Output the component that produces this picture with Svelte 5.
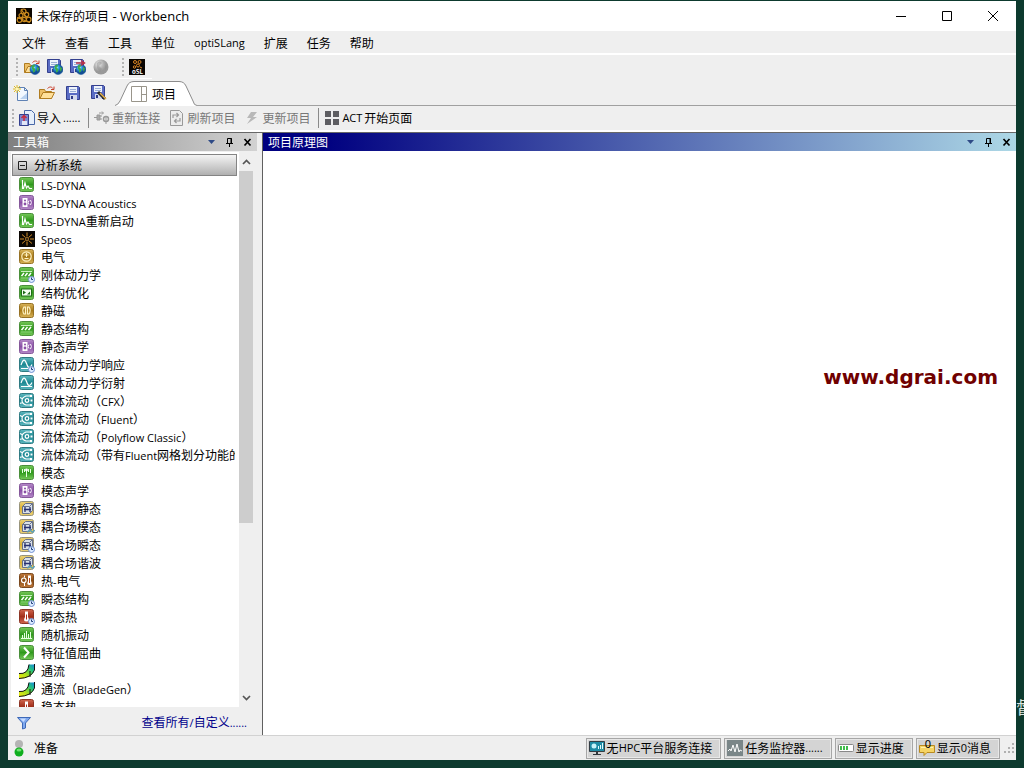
<script>
  const menus = ['文件', '查看', '工具', '单位', 'optiSLang', '扩展', '任务', '帮助'];
  const systems = [
    ['LS-DYNA', 'dyna'],
    ['LS-DYNA Acoustics', 'acoustic'],
    ['LS-DYNA重新启动', 'dyna'],
    ['Speos', 'speos'],
    ['电气', 'electric'],
    ['刚体动力学', 'structure', 'clock'],
    ['结构优化', 'optimize'],
    ['静磁', 'magnet'],
    ['静态结构', 'structure'],
    ['静态声学', 'acoustic'],
    ['流体动力学响应', 'hydro', 'clock'],
    ['流体动力学衍射', 'hydro'],
    ['流体流动（CFX）', 'fluid'],
    ['流体流动（Fluent）', 'fluid'],
    ['流体流动（Polyflow Classic）', 'fluid'],
    ['流体流动（带有Fluent网格划分功能的）', 'fluid'],
    ['模态', 'modal'],
    ['模态声学', 'acoustic'],
    ['耦合场静态', 'coupled'],
    ['耦合场模态', 'coupled', 'wave'],
    ['耦合场瞬态', 'coupled', 'clock'],
    ['耦合场谐波', 'coupled', 'wave'],
    ['热-电气', 'thermoelectric'],
    ['瞬态结构', 'structure', 'clock'],
    ['瞬态热', 'thermal', 'clock'],
    ['随机振动', 'random'],
    ['特征值屈曲', 'buckling'],
    ['通流', 'blade'],
    ['通流（BladeGen）', 'blade'],
    ['稳态热', 'thermal']
  ];
  const tiles = {
    dyna: 'green', structure: 'green', optimize: 'green', modal: 'green', random: 'green', buckling: 'green',
    acoustic: 'purple', electric: 'gold', magnet: 'gold', hydro: 'teal', fluid: 'teal',
    coupled: 'sand', thermoelectric: 'brown', thermal: 'red'
  };
  const gradients = [
    ['green', '#77c95a', '#2f9a1c', '#4a8f3a'],
    ['purple', '#b58bc8', '#8a4fa6', '#85589a'],
    ['gold', '#d9b45a', '#a87a18', '#967226'],
    ['teal', '#5fb9c0', '#1c8791', '#2f7a82'],
    ['sand', '#ead27a', '#dcb030', '#97937c'],
    ['brown', '#c07a3c', '#8a4a12', '#7b4a20'],
    ['red', '#d0664e', '#a3301c', '#8d3626']
  ];
  const strokes = Object.fromEntries(gradients.map((g) => [g[0], g[3]]));
  const split = (text) => text.match(/[\x20-\x7e]+|[^\x20-\x7e]+/g);
  const latin = (part) => /^[\x20-\x7e]/.test(part);
</script>

{#snippet label(text)}{#each split(text) as part}<span class:latin={latin(part)}>{part}</span>{/each}{/snippet}

{#snippet floppy(x, y)}
  <g transform="translate({x} {y})">
    <path d="M.5 .5h12l1 1v12H.5z" fill="#5a6cc4" stroke="#34408e" />
    <path d="M3 1h8v6H3z" fill="#eef3fb" /><path d="M4 3.500h6M4 5.500h6" stroke="#9aaed6" />
    <path d="M4 9h7v5H4z" fill="#d5daec" /><path d="M5 10h2v3H5z" fill="#2d3a86" />
  </g>
{/snippet}

{#snippet globe()}
  <circle cx="11" cy="10.5" r="5" fill="url(#globe)" stroke="#1d5b9c" stroke-width=".6" />
  <path d="M8 7c2-2 3-1 3 0s-2 1-1 2 2 1 1 3-2 2-2 0-2-2-1-5zM13 8l2 1-1 4-1-2z" fill="#3fae4a" />
{/snippet}

{#snippet folder()}
  <path d="M.5 13.500v-9h5l1 2h6v7z" fill="#eec068" stroke="#b07c20" />
  <path d="M1 13.500l3-6h11.500l-3 6z" fill="#ffe09a" stroke="#b07c20" />
  <path d="M8.500 3.500c2-2 4-2 5.500 0M15 1.500v3h-3" fill="none" stroke="#c8402c" />
{/snippet}

{#snippet icon(kind, extra)}
  <svg class="icon" width="16" height="16" viewBox="0 0 16 16" aria-hidden="true">
    {#if tiles[kind]}
      <rect x=".5" y=".5" width="14" height="14" rx="2" fill="url(#{tiles[kind]})" stroke={strokes[tiles[kind]]} />
    {/if}
    {#if kind === 'dyna'}
      <path d="M3.500 3v8.500h1L6 6l1.500 5 1.500-2 1.500 2.500H13" fill="none" stroke="#fff" stroke-width="1.200" />
    {:else if kind === 'acoustic'}
      <rect x="3.500" y="3" width="5" height="9" fill="#fff" /><circle cx="6" cy="5.500" r="1" fill="#8a4fa6" /><circle cx="6" cy="9" r="1.400" fill="#8a4fa6" />
      <path d="M10 5.500q-1.500 2 0 4M11.500 5q1.800 2.500 0 5" fill="none" stroke="#fff" />
    {:else if kind === 'speos'}
      <path d="M0 0h16v16H0z" fill="#0c0803" />
      <path d="M8 1.500v4M8 10.500v4M1 8h4M11 8h4M3 3.500l3.500 3M9.500 9.500l3.500 3M13 3.500l-3.500 3M6.500 9.500l-3.500 3" stroke="#d08c28" />
      <circle cx="8" cy="8" r="1.500" fill="#0c0803" stroke="#e0a040" stroke-width=".7" />
    {:else if kind === 'electric'}
      <circle cx="7.500" cy="7.500" r="4.700" fill="none" stroke="#fff3c4" stroke-width="1.200" />
      <path d="M5.500 6h4M7.500 4v4M5.500 9.500h4" stroke="#fff3c4" />
    {:else if kind === 'magnet'}
      <path d="M6.500 3.500v8M8.500 3.500v8M5.500 3.500q-3.500 4 0 8M9.500 3.500q3.500 4 0 8" fill="none" stroke="#fff3c4" stroke-width="1.200" />
    {:else if kind === 'structure'}
      <path d="M2 4.500h11" stroke="#c9efbd" /><path d="M2.500 9l2.500-3M6 9l2.500-3M9.500 9L12 6" stroke="#fff" stroke-width="1.500" />
      <path d="M2 11h11" stroke="#8cd47a" />
    {:else if kind === 'optimize'}
      <rect x="2.500" y="4" width="10" height="7" fill="#f5fff0" stroke="#206e18" /><path d="M4 5.500l3 2-3 2zM8 9.500l3-3v3z" fill="#1f6b18" />
    {:else if kind === 'hydro'}
      <path d="M2 8q3-9 5.500-1.500T13 7.500M2 11.500h11" fill="none" stroke="#fff" stroke-width="1.200" />
    {:else if kind === 'fluid'}
      <circle cx="8" cy="7.500" r="1.800" fill="none" stroke="#fff" stroke-width="1.300" />
      <path d="M12 3H7Q3 4.500 3 7.500T7 12h5M1 4.500L4 6M1 10.500L4 9" fill="none" stroke="#fff" stroke-width="1.200" /><path d="M11 2h2v2h-2zM11 11h2v2h-2zM11.500 6.500h2v2h-2z" fill="#fff" />
    {:else if kind === 'modal'}
      <path d="M7.500 6v6M3.500 4v4M5.500 4v3M9.500 4v3M11.500 4v4" stroke="#e6ffe0" /><circle cx="7.500" cy="5" r="1.400" fill="#fff" />
    {:else if kind === 'coupled'}
      <path d="M3.500 5.500l3-3h7v7l-3 3h-7z" fill="#d9e0e8" stroke="#66718a" /><path d="M3.500 5.500h7M10.500 5.500l3-3" fill="none" stroke="#66718a" />
      <path d="M6 6v5M11 6v5M5 8.500h7" stroke="#273070" stroke-width="1.300" />
    {:else if kind === 'thermoelectric'}
      <path d="M5.500 2.500v2M5.500 10v3" stroke="#fff" /><circle cx="4.800" cy="7.300" r="2.300" fill="none" stroke="#fff" stroke-width="1.200" /><path d="M9 2.500h3V8q2 4-1.500 4T9 8z" fill="#fff" /><path d="M10.500 5v5" stroke="#b4481c" />
    {:else if kind === 'thermal'}
      <path d="M6 2.500h3V8q2.500 4.500-1.500 4.500T6 8z" fill="#fff" /><path d="M7.500 5.500v5" stroke="#b02a18" />
    {:else if kind === 'random'}
      <path d="M3.500 8v4M5.500 6v6M7.500 4v8M9.500 7v5M11.500 5v7M2 11.500h11" stroke="#e6ffe0" />
    {:else if kind === 'buckling'}
      <path d="M5 2.500l4.500 5-4.500 5" fill="none" stroke="#fff" stroke-width="2" />
    {:else if kind === 'blade'}
      <path d="M0 10.500q9 1 10-9h5.500q0 5-1 8-4 6-14.500 6z" fill="url(#blade)" />
      <path d="M0 10.500q9 1 10-9M15.500 1v6q-3 8-15.500 8.500M11 8v6" fill="none" stroke="#111" />
    {/if}
    {#if extra === 'clock'}
      <circle cx="12.500" cy="12.500" r="3" fill="#dcebff" stroke="#6f8fd0" /><path d="M12.500 10.500v2h1.500" fill="none" stroke="#24407c" />
    {:else if extra === 'wave'}
      <path d="M8.500 13.500q2-4 3.500-1.500t3.500-1" fill="none" stroke="#5aa0b8" stroke-width="1.500" />
    {/if}
  </svg>
{/snippet}

{#snippet paneTools()}
  <span class="pane-tools">
    <button aria-label="选项"><svg width="9" height="10" viewBox="0 0 9 10"><path d="M1 3h7L4.500 7z" fill="#2e4a86" /></svg></button>
    <button aria-label="固定"><svg width="9" height="10" viewBox="0 0 9 10"><path d="M2.500 6V1.500h4V6M1 6.500h7M4.500 7v3M6 1v5" fill="none" stroke="#000" /></svg></button>
    <button aria-label="关闭"><svg width="9" height="10" viewBox="0 0 9 10"><path d="M1.500 2l6 6.500M7.500 2l-6 6.500" stroke="#000" stroke-width="1.700" /></svg></button>
  </span>
{/snippet}

<svg class="defs" aria-hidden="true">
  <defs>
    {#each gradients as g}
      <linearGradient id={g[0]} x2="0" y2="1"><stop stop-color={g[1]} /><stop offset=".5" stop-color={g[2]} /><stop offset="1" stop-color={g[1]} /></linearGradient>
    {/each}
    <linearGradient id="blade" x1="0" y1="1" x2="1" y2="0"><stop stop-color="#f4e80c" /><stop offset=".4" stop-color="#a5df20" /><stop offset=".7" stop-color="#22c47a" /><stop offset="1" stop-color="#1a86e0" /></linearGradient>
    <radialGradient id="globe" cx=".35" cy=".3"><stop stop-color="#bfefff" /><stop offset=".5" stop-color="#2a9be0" /><stop offset="1" stop-color="#124d96" /></radialGradient>
    <radialGradient id="ball" cx=".35" cy=".3"><stop stop-color="#eee" /><stop offset=".6" stop-color="#b4b4b4" /><stop offset="1" stop-color="#999" /></radialGradient>
  </defs>
</svg>

<div class="desktop">
  <span class="shortcut">督</span>
  <main class="window">
    <header class="titlebar">
      <svg width="16" height="16" viewBox="0 0 16 16" aria-hidden="true">
        <path d="M0 0h16v16H0z" fill="#0d0700" />
        <g fill="none" stroke="#c98a1e" stroke-width="1.200"><circle cx="7.500" cy="3.500" r="2.500" /><circle cx="5" cy="7.500" r="2" /><circle cx="10.500" cy="6.500" r="2.200" /><circle cx="3.500" cy="12" r="2.300" /><circle cx="8.200" cy="11.500" r="2.200" /><circle cx="12.700" cy="11.500" r="2.300" /><path d="M1 9.500l13 5M5 1l6 9" /></g>
      </svg>
      <h1>未保存的项目<span>{' - Workbench'}</span></h1>
      <div class="caption">
        <button aria-label="最小化"><svg width="12" height="12" viewBox="0 0 12 12"><path d="M1 6.500h10" stroke="#000" /></svg></button>
        <button aria-label="最大化"><svg width="12" height="12" viewBox="0 0 12 12"><path d="M1.500 1.500h9v9h-9z" fill="none" stroke="#000" /></svg></button>
        <button aria-label="关闭窗口"><svg width="12" height="12" viewBox="0 0 12 12"><path d="M1 1l10 10M11 1L1 11" stroke="#000" /></svg></button>
      </div>
    </header>

    <nav class="menu">
      {#each menus as m}<button>{@render label(m)}</button>{/each}
    </nav>

    <div class="tools">
      <i class="grip"></i>
      <button aria-label="从存储库打开"><svg width="16" height="16" viewBox="0 0 16 16">{@render folder()}{@render globe()}</svg></button>
      <button aria-label="保存到存储库"><svg width="16" height="16" viewBox="0 0 16 16">{@render floppy(0, 0)}{@render globe()}</svg></button>
      <button aria-label="发送更改"><svg width="16" height="16" viewBox="0 0 16 16">{@render floppy(0, 0)}{@render globe()}<path d="M6 4h8M11 1.500L14.500 4 11 6.500" fill="none" stroke="#b83048" stroke-width="1.500" /></svg></button>
      <button aria-label="连接" disabled><svg width="16" height="16" viewBox="0 0 16 16"><circle cx="8" cy="8" r="7.500" fill="url(#ball)" /><path d="M4 4q3-3 5 0l-3 3 3 3-2 3-3-4zM12 6l2 2-2 4z" fill="#909090" opacity=".5" /></svg></button>
      <i class="grip second"></i>
      <button aria-label="oSL"><svg width="16" height="16" viewBox="0 0 16 16"><path d="M0 0h16v16H0z" fill="#0a0603" /><g fill="none" stroke="#d88424"><circle cx="6" cy="3" r="1.500" /><circle cx="10.500" cy="3" r="1.500" /><circle cx="9" cy="6.500" r="1.500" /><circle cx="5.500" cy="8" r="1.200" /><path d="M11 8l2 1" /></g><text x="3" y="15" fill="#fff" font-size="6" font-weight="700">oSL</text></svg></button>
    </div>

    <div class="tabs">
      <button aria-label="新建"><svg width="16" height="16" viewBox="0 0 16 16"><path d="M4.500 2.500h7l3 3v10h-10z" fill="#f2f8ff" stroke="#5f82b4" /><path d="M11.500 2.500v3h3" fill="none" stroke="#5f82b4" /><path d="M7 14h7V8z" fill="#b9d2f0" /><path d="M4 0v8M0 4h8M1 1l6 6M7 1L1 7" stroke="#e0bb20" /><circle cx="4" cy="4" r="1.500" fill="#fff7b0" /></svg></button>
      <button aria-label="打开"><svg width="16" height="16" viewBox="0 0 16 16">{@render folder()}</svg></button>
      <button aria-label="保存"><svg width="16" height="16" viewBox="0 0 16 16">{@render floppy(1, 1)}</svg></button>
      <button aria-label="另存为"><svg width="16" height="16" viewBox="0 0 16 16">{@render floppy(0, 0)}<path d="M7 7l7 7" stroke="#2a2a2a" stroke-width="3" /><path d="M9 8l6 6" stroke="#e4b04c" stroke-width="1.500" /></svg></button>
      <button class="tab">
        <svg class="shape" width="82" height="25" viewBox="0 0 82 25" aria-hidden="true"><path d="M0 25Q3 24 5 20L12 5Q14 1 19 1H64Q69 1 71 5L78 20Q79 24 82 24V25z" fill="#fff" /><path d="M0 24.500Q3 24 5 20L12 5Q14 .5 19 .5H64Q69 .5 71 5L78 20Q79 24.500 82 24.500" fill="none" stroke="#8c8c8c" /></svg>
        <svg width="16" height="16" viewBox="0 0 16 16" aria-hidden="true"><path d="M.5 .5h15v15H.5zM10.500 .5v15M10.500 8.500h5" fill="none" stroke="#99958b" /></svg>
        <span>项目</span>
      </button>
      <i class="rule"></i>
    </div>

    <div class="actions">
      <i class="grip"></i>
      <button><svg width="16" height="16" viewBox="0 0 16 16" aria-hidden="true"><path d="M5.500 .5h7l3 3v11h-10z" fill="#e5eefa" stroke="#4868a8" /><path d="M.5 4.500h9v11h-9z" fill="#7c8ad0" stroke="#34408e" /><path d="M3 11h5v4H3z" fill="#e1e6f6" /><path d="M5 11V6M2.500 8L5 5.500 7.500 8" fill="none" stroke="#c62c40" stroke-width="1.500" /></svg>{@render label('导入......')}</button>
      <i class="sep"></i>
      <button disabled><svg width="16" height="16" viewBox="0 0 16 16" aria-hidden="true"><path d="M0 7.500h3M3 5h3v5H3zM6 6h2M6 9h2" fill="#aaa" stroke="#999" /><circle cx="12" cy="9" r="2.500" fill="none" stroke="#999" stroke-width="1.500" /><path d="M12 6v8M5 3h4M8 1.500L9.500 3 8 4.500" fill="none" stroke="#999" /></svg>重新连接</button>
      <button class="refresh" disabled><svg width="16" height="16" viewBox="0 0 16 16" aria-hidden="true"><path d="M1.500 .5h9l3 3v12h-12z" fill="#ececec" stroke="#999" /><path d="M4 8V5h5M7.500 3l2 2-2 2M11 8v3H6M7.500 9l-2 2 2 2" fill="none" stroke="#999" stroke-width="1.200" /></svg>刷新项目</button>
      <button class="update" disabled><svg width="16" height="16" viewBox="0 0 16 16" aria-hidden="true"><path d="M7 2h6L9 7h4L3 14l4-6H3z" fill="#b8b8b8" /></svg>更新项目</button>
      <i class="sep"></i>
      <button><svg width="16" height="16" viewBox="0 0 16 16" aria-hidden="true"><path d="M1 1h6v6H1zM9 1h6v6H9zM1 9h6v6H1zM9 9h6v6H9z" fill="#5e5e62" /></svg>{@render label('ACT开始页面')}</button>
    </div>

    <div class="workspace">
      <aside>
        <header class="pane-title toolbox"><h2>工具箱</h2>{@render paneTools()}</header>
        <div class="scroller">
          <div class="list">
            <button class="group"><svg width="9" height="9" viewBox="0 0 9 9" aria-hidden="true"><path d="M.5 .5h8v8h-8zM2 4.500h5" fill="none" stroke="#222" /></svg>分析系统</button>
            <ul>
              {#each systems as s}<li>{@render icon(s[1], s[2])}<span class="name">{@render label(s[0])}</span></li>{/each}
            </ul>
          </div>
          <div class="bar">
            <button aria-label="向上"><svg width="9" height="6" viewBox="0 0 9 6"><path d="M1 5l3.500-3.500L8 5" fill="none" stroke="#555" stroke-width="1.700" /></svg></button>
            <div class="track"><i class="thumb"></i></div>
            <button aria-label="向下"><svg width="9" height="6" viewBox="0 0 9 6"><path d="M1 1l3.500 3.500L8 1" fill="none" stroke="#555" stroke-width="1.700" /></svg></button>
          </div>
        </div>
        <footer>
          <button aria-label="筛选"><svg width="14" height="14" viewBox="0 0 14 14"><path d="M.5 1.500h13L8.500 7v5l-3 1V7z" fill="#7fa8ee" stroke="#3e69b8" /><path d="M3 2.500h6L6.500 6z" fill="#c8dcff" /></svg></button>
          <a href="#all">{@render label('查看所有/自定义......')}</a>
        </footer>
      </aside>

      <section>
        <header class="pane-title schematic"><h2>项目原理图</h2>{@render paneTools()}</header>
        <div class="canvas"><p class="mark">www.dgrai.com</p></div>
      </section>
    </div>

    <footer class="status">
      <svg width="10" height="18" viewBox="0 0 10 18" aria-hidden="true"><circle cx="5" cy="5" r="4" fill="#b4b4b4" /><circle cx="5" cy="13" r="4.500" fill="#0fae1e" /><ellipse cx="5" cy="11" rx="2.500" ry="1.500" fill="#6de06f" /></svg>
      <span class="ready">准备</span>
      <button><svg width="16" height="16" viewBox="0 0 16 16" aria-hidden="true"><path d="M.5 1.500h15v10H.5z" fill="#1d8aa4" stroke="#333b42" /><path d="M7 12h2v2h3v1H4v-1h3z" fill="#30363b" /><circle cx="5" cy="6" r="2.500" fill="#c7f2fa" /><path d="M9.500 9V6M11.500 9V5M13.500 9V3" stroke="#dffaff" /></svg>{@render label('无HPC平台服务连接')}</button>
      <button><svg width="16" height="16" viewBox="0 0 16 16" aria-hidden="true"><path d="M0 0h16v16H0z" fill="#7a8688" /><path d="M1 11l2-2 1 2 2-6 2 7 1-4 1-4 2 8 1-2 2 1" fill="none" stroke="#fff" /></svg>{@render label('任务监控器......')}</button>
      <button><svg width="16" height="16" viewBox="0 0 16 16" aria-hidden="true"><rect x=".5" y="4.500" width="15" height="7" rx="1" fill="#fff" stroke="#888" /><path d="M2 6h2v4H2zM5 6h2v4H5zM8 6h2v4H8z" fill="#40bd4b" /></svg>显示进度</button>
      <button><span class="bubble"><svg width="16" height="16" viewBox="0 0 16 16" aria-hidden="true"><path d="M.5 5.500h15v7H8l-3 3v-3H.5z" fill="#f6d464" stroke="#b88a20" /><path d="M2 7.500h12" stroke="#fff2ac" /></svg><b>0</b></span>{@render label('显示0消息')}</button>
      <svg class="resize" width="12" height="12" viewBox="0 0 12 12" aria-hidden="true"><path d="M9 1h2v2H9zM5 5h2v2H5zM9 5h2v2H9zM1 9h2v2H1zM5 9h2v2H5zM9 9h2v2H9z" fill="#b0b0b0" /></svg>
    </footer>
  </main>
</div>

<style>
  :global(body) { margin: 0; }
  .desktop { position: relative; box-sizing: border-box; height: 100vh; padding: 1px 8px 8px; overflow: hidden; background: #0d3a2e; font: 12px/18px "Noto Sans CJK SC", sans-serif; color: #000; text-autospace: no-autospace; }
  .shortcut { position: absolute; top: 697px; right: -9px; font-size: 17px; line-height: 20px; color: #dce6e2; }
  .window { position: relative; display: flex; flex-direction: column; height: 100%; background: #efefef; }
  .defs { position: absolute; width: 0; height: 0; }
  svg { display: block; flex: none; }
  button { display: flex; align-items: center; margin: 0; padding: 0; border: 0; background: none; font: inherit; color: inherit; white-space: nowrap; text-autospace: inherit; }
  button:disabled { color: #777; }
  button > span { flex: none; }
  h1, h2, p, ul { margin: 0; padding: 0; font: inherit; }
  .latin { font-family: "Open Sans", "Noto Sans", sans-serif; font-size: 11px; white-space: pre; }

  .titlebar { display: flex; flex: none; align-items: center; height: 30px; padding-left: 8px; background: #fff; }
  h1 { flex: 1; padding-left: 5px; }
  h1 span { font-family: "Open Sans", "Noto Sans", sans-serif; font-size: 13px; white-space: pre; }
  .caption { display: flex; align-self: stretch; }
  .caption button { width: 46px; justify-content: center; }

  .menu { display: flex; flex: none; gap: 19px; height: 22px; padding: 0 14px; border-bottom: 2px solid #fff; }
  .menu button { padding-top: 2px; }

  .grip { width: 2px; height: 18px; flex: none; background: repeating-linear-gradient(#b4b4b4 0 2px, transparent 2px 4px); }
  .tools { display: flex; flex: none; align-items: center; gap: 7px; height: 24px; padding-left: 8px; background: linear-gradient(#fff, #fff) no-repeat 4px 100% / 140px 1px; }
  .tools .grip { margin-right: -1px; }
  .tools .grip.second { margin: 0 -2px 0 6px; }

  .tabs { display: flex; flex: none; align-items: center; gap: 10px; height: 27px; padding-left: 5px; }
  .tab { position: relative; align-self: flex-end; gap: 5px; height: 25px; padding: 0 18px 0 16px; margin-left: -2px; }
  .tab svg, .tab span { position: relative; }
  .tab .shape { position: absolute; inset: 0 auto auto 0; }
  .rule { flex: 1; align-self: flex-end; height: 1px; margin-left: -10px; background: #a0a0a0; }

  .actions { display: flex; flex: none; align-items: center; height: 24px; padding-left: 4px; border-bottom: 2px solid #fff; }
  .actions button { gap: 2px; }
  .actions .grip { margin-right: 5px; }
  .sep { width: 1px; height: 20px; margin: 0 5px 0 8px; background: #8a8a8a; }
  .refresh, .update { margin-left: 9px; }

  .workspace { display: flex; flex: 1; min-height: 0; border-top: 1px solid #686868; }
  aside { display: flex; flex: none; flex-direction: column; width: 249px; margin-right: 5px; }
  section { display: flex; flex: 1; flex-direction: column; min-width: 0; border-left: 1px solid #606060; }
  .pane-title { display: flex; flex: none; align-items: center; justify-content: space-between; height: 18px; padding: 0 5px; color: #fff; }
  .toolbox { background: linear-gradient(90deg, #808080, #d2d2d2); }
  .schematic { background: linear-gradient(90deg, #000080 8%, #add8e6); }
  .pane-tools { display: flex; gap: 9px; }

  .scroller { display: flex; flex: 1; min-height: 0; margin: 1px 4px 0 3px; }
  .list { flex: 1; min-width: 0; overflow: hidden; padding: 2px 2px 0 1px; background: #fff; }
  .group { box-sizing: border-box; width: 100%; height: 22px; gap: 7px; padding: 0 5px; border: 1px solid #848484; background: linear-gradient(#f4f4f4, #b0b0b0); }
  ul { list-style: none; padding: 0 2px 0 7px; }
  li { display: flex; align-items: center; height: 18px; gap: 6px; }
  .name { flex: 1; overflow: hidden; white-space: nowrap; }
  .bar { display: flex; flex: none; flex-direction: column; width: 14px; background: #efefef; }
  .bar button { height: 19px; justify-content: center; }
  .track { flex: 1; }
  .thumb { display: block; height: 68%; background: #cdcdcd; }
  aside footer { display: flex; flex: none; align-items: center; justify-content: space-between; box-sizing: border-box; height: 28px; padding: 3px 10px 0 9px; }
  a { color: #00008b; text-decoration: none; }

  .canvas { position: relative; flex: 1; background: #fff; }
  .mark { position: absolute; top: 214px; right: 18px; font: bold 20px/24px "DejaVu Sans", sans-serif; color: #700000; }

  .status { display: flex; flex: none; align-items: center; gap: 3px; height: 24px; padding: 0 1px 0 6px; border-top: 1px solid #d2d2d2; }
  .ready { flex: 1; padding-left: 7px; }
  .status button { box-sizing: border-box; height: 21px; padding: 0 8px 0 2px; border: 1px solid #a6a6a6; background: #d4d4d4; box-shadow: inset 0 0 0 1px #e8e8e8; }
  .status button > svg, .bubble { margin-right: 2px; }
  .bubble { position: relative; display: block; }
  .bubble b { position: absolute; top: -3px; left: 6px; font: 11px/14px "Noto Sans", sans-serif; }
</style>
